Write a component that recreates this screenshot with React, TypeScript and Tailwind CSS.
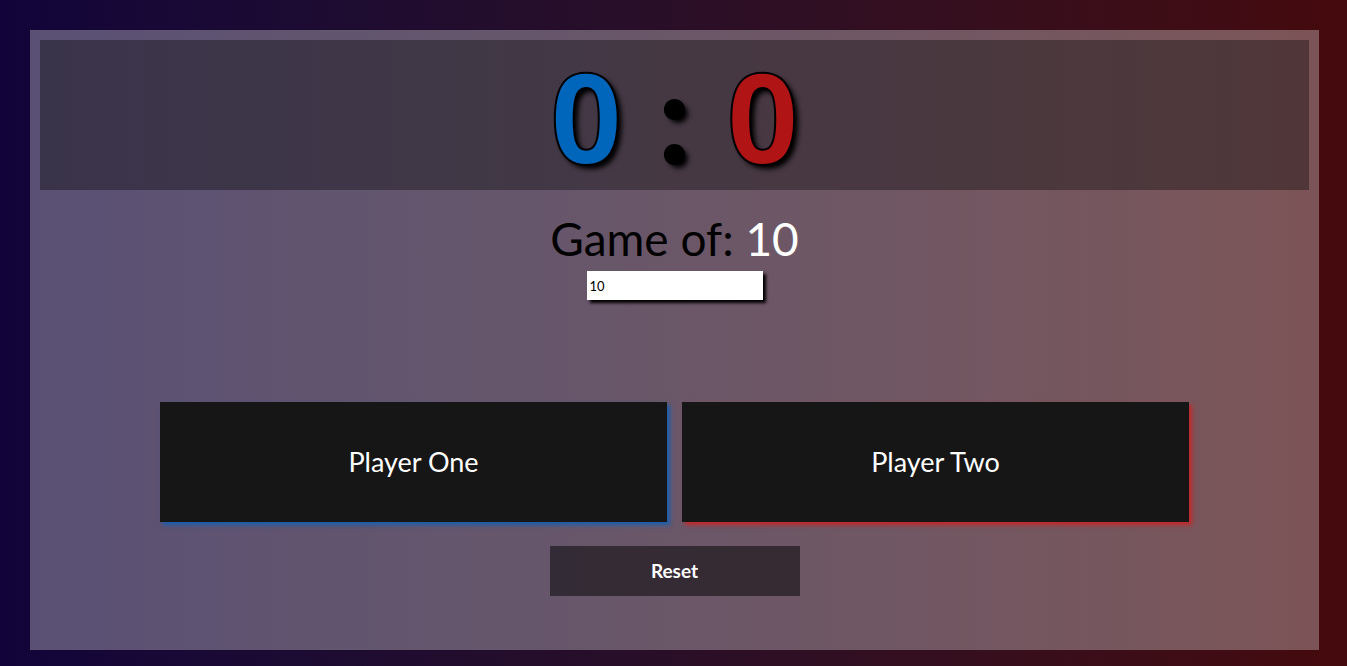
import { useState } from 'react';

const font = { fontFamily: 'Lato, "Open Sans", sans-serif' };

function ScoreBoard({ one, two }: { one: number; two: number }) {
    return (
        <div className="flex h-[150px] items-center justify-center bg-black/35">
            <p className="flex items-center font-['Open_Sans',sans-serif] text-[126px] font-bold leading-none [text-shadow:4px_4px_5px_#000] [-webkit-text-stroke:2px_#000]">
                <span className="text-[#0066bb]">{one}</span>
                <span className="mx-[36px] font-['Lato',sans-serif] text-black">:</span>
                <span className="text-[#b01414]">{two}</span>
            </p>
        </div>
    );
}

export default function App() {
    const [target, setTarget] = useState('10');
    const [scores, setScores] = useState({ one: 0, two: 0 });

    return (
        <div
            className="h-screen overflow-hidden bg-gradient-to-r from-[#12043a] to-[#450a0d] pt-[30px] pr-[28px] pl-[30px]"
            style={font}
        >
            <div className="flex h-[620px] flex-col bg-white/30 p-[10px]">
                <ScoreBoard one={scores.one} two={scores.two} />
                <div className="flex flex-col items-center">
                    <h1 className="mt-[19px] text-[46px] leading-[60px] text-black">
                        Game of: <span className="text-white">{target}</span>
                    </h1>
                    <input
                        className="mt-[2px] h-[29px] w-[176px] bg-white px-[3px] text-[13px] text-black shadow-[3px_3px_3px_#000] outline-none"
                        value={target}
                        onChange={(e) => setTarget(e.target.value)}
                    />
                    <div className="mt-[102px] flex gap-[15px]">
                        <button
                            className="h-[120px] w-[507px] bg-[#161616] text-[27px] text-white shadow-[3px_3px_4px_#1a5fae]"
                            onClick={() => setScores({ ...scores, one: scores.one + 1 })}
                        >
                            Player One
                        </button>
                        <button
                            className="h-[120px] w-[507px] bg-[#161616] text-[27px] text-white shadow-[3px_3px_4px_#c4282c]"
                            onClick={() => setScores({ ...scores, two: scores.two + 1 })}
                        >
                            Player Two
                        </button>
                    </div>
                    <button
                        className="mt-[24px] h-[50px] w-[250px] bg-black/50 text-[19px] font-bold text-white"
                        onClick={() => setScores({ one: 0, two: 0 })}
                    >
                        Reset
                    </button>
                </div>
            </div>
        </div>
    );
}
